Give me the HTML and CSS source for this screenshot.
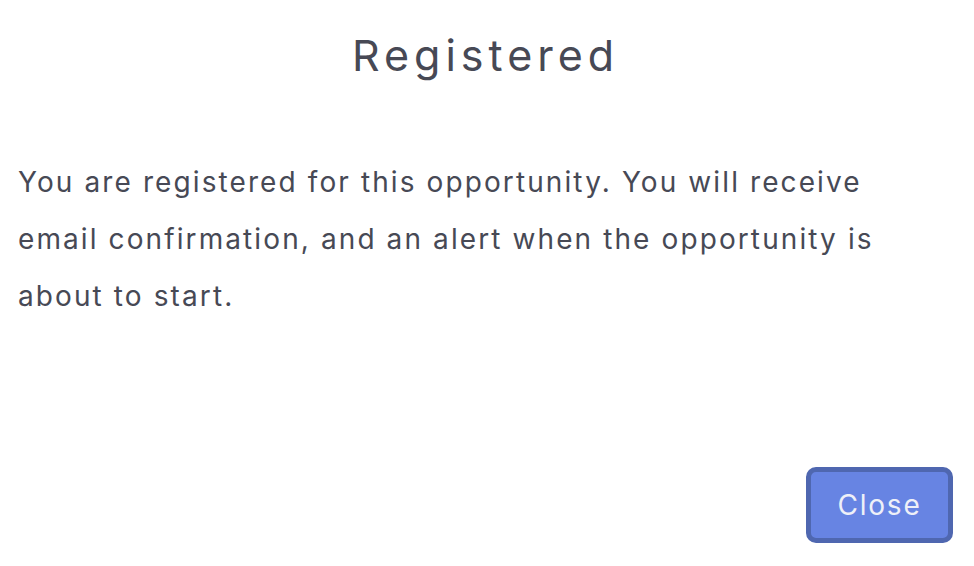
FILE: index.html
```html
<!DOCTYPE html>
<html lang="en">
<head>
    <meta charset="UTF-8">
    <meta name="viewport" content="width=device-width, initial-scale=1.0">
    <title>Registered</title>
    <link rel="stylesheet" href="styles.css">
</head>
<body>
    <div class="modal">
        <h1 class="modal-title">Registered</h1>
        <p class="modal-body">You are registered for this opportunity. You will receive email confirmation, and an alert when the opportunity is about to start.</p>
        <div class="modal-footer">
            <button type="button" class="close-button">Close</button>
        </div>
    </div>
</body>
</html>
```

FILE: styles.css
```css
body {
    font-family: Inter, 'Noto Sans', sans-serif;
    margin: 0;
    padding: 0;
    background-color: #ffffff;
    color: #474955;
}
.modal {
    height: 566px;
    box-sizing: border-box;
    padding: 20px 21px 23px 18px;
    display: flex;
    flex-direction: column;
}
.modal-title {
    text-align: center;
    font-size: 43px;
    font-weight: 400;
    letter-spacing: 5px;
    margin: 0;
    line-height: 70px;
}
.modal-body {
    font-size: 28px;
    line-height: 57px;
    letter-spacing: 2.1px;
    margin: 64px 0 0 0;
    max-width: 900px;
}
.modal-footer {
    margin-top: auto;
    display: flex;
    justify-content: flex-end;
}
.close-button {
    width: 147px;
    height: 76px;
    font-family: inherit;
    font-size: 28px;
    letter-spacing: 1.8px;
    color: #eef0f8;
    background-color: #6784e3;
    border: 5px solid #4f67b0;
    border-radius: 10px;
    cursor: pointer;
}
```
